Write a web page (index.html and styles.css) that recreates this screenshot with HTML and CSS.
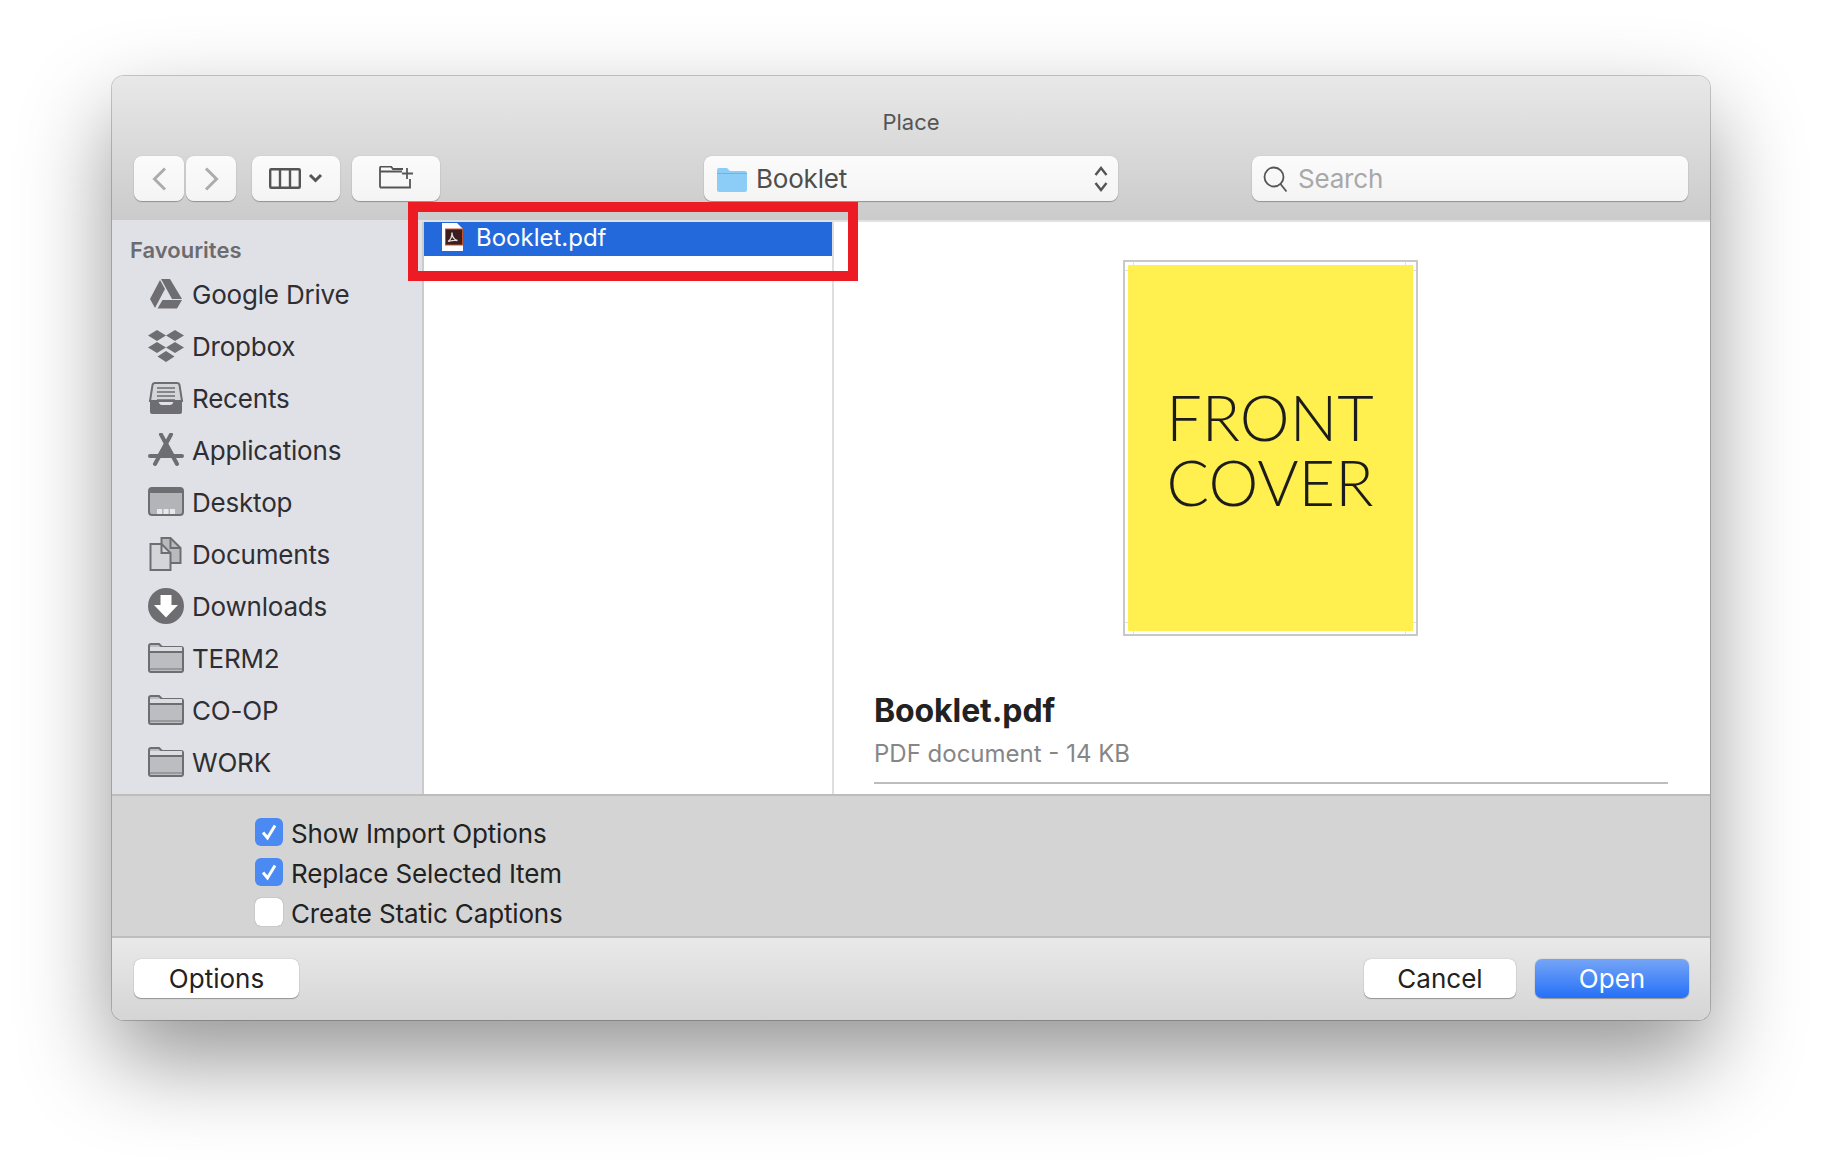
FILE: index.html
```html
<!DOCTYPE html>
<html lang="en">
<head>
    <meta charset="UTF-8">
    <title>Place</title>
    <link rel="stylesheet" href="styles.css">
</head>
<body>
    <div class="window">
        <div class="toolbar">
            <div class="title">Place</div>
            <div class="controls">
                <div class="nav-group">
                    <button class="tool nav-btn"><svg width="15" height="24" viewBox="0 0 15 24"><path d="M13 1.500 2.500 12 13 22.500" class="chev"/></svg></button>
                    <button class="tool nav-btn"><svg width="15" height="24" viewBox="0 0 15 24"><path d="M2 1.500 12.500 12 2 22.500" class="chev"/></svg></button>
                </div>
                <button class="tool view-btn">
                    <svg width="54" height="22" viewBox="0 0 54 22"><rect x="1.200" y="1.200" width="29.600" height="18.600" rx="1" class="line"/><path d="M11 1v19M21 1v19" class="line"/><path d="M41 7l5.500 5.500L52 7" class="line thick"/></svg>
                </button>
                <button class="tool folder-btn">
                    <svg width="36" height="26" viewBox="0 0 36 26"><path d="M2 21.500V2Q2 .500 3.500 .500H13l2 2.500h10M2 5.500h22M32 13v8.500H2" class="line thin"/><path d="M29 2v11M24 7.500h11" class="line thin"/></svg>
                </button>
                <div class="popup">
                    <svg width="32" height="26" viewBox="0 0 32 26"><path d="M1 4q0-2 2-2h8l3 3h15q2 0 2 2v17q0 2-2 2H3q-2 0-2-2z" fill="#8ccdf8"/><path d="M1 7h30v1H1z" fill="#6db5e8"/></svg>
                    <span class="popup-label">Booklet</span>
                    <svg class="updown" width="16" height="28" viewBox="0 0 16 28"><path d="M2.500 10 8 3l5.500 7M2.500 18 8 25l5.500-7" class="line"/></svg>
                </div>
                <div class="search">
                    <svg width="28" height="28" viewBox="0 0 28 28"><circle cx="12" cy="12" r="9.500" class="line thin"/><path d="M18.500 19l6 7.500" class="line thin"/></svg>
                    <span class="search-text">Search</span>
                </div>
            </div>
        </div>

        <div class="main">
            <div class="sidebar">
                <div class="side-head">Favourites</div>
                <div class="side-item">
                    <svg width="36" height="32" viewBox="0 0 36 32"><path d="M13 1h9l12 20H24zM12 2l5 9L7 30 2 21zM14.500 22H34l-5 8.500H9.500z" class="ico"/></svg>
                    <span>Google Drive</span>
                </div>
                <div class="side-item">
                    <svg width="36" height="34" viewBox="0 0 36 34"><path d="M9 1l9 5.500L9 12 0 6.500zM27 1l9 5.500-9 5.500-9-5.500zM9 13l9 5.500L9 24l-9-5.500zM27 13l9 5.500-9 5.500-9-5.500zM18 22l8.500 5.500L18 33l-8.500-5.500z" class="ico"/></svg>
                    <span>Dropbox</span>
                </div>
                <div class="side-item">
                    <svg width="36" height="34" viewBox="0 0 36 34"><path d="M7 2h22q2 0 2.500 2L34 20H2L4.500 4Q5 2 7 2z" fill="#d4d5d9" stroke="#6e6e72" stroke-width="2"/><path d="M9 7h18M9 11h18M9 15h18M9 19h18" stroke="#6e6e72" stroke-width="1.600"/><path d="M2 19h8q1 5 4 5h8q3 0 4-5h8v12q0 2-2 2H4q-2 0-2-2z" class="ico"/></svg>
                    <span>Recents</span>
                </div>
                <div class="side-item">
                    <svg width="36" height="34" viewBox="0 0 36 34"><path d="M13 1.500 29 31M23 1.500 7 31" stroke="#6e6e72" stroke-width="4" stroke-linecap="round" fill="none"/><path d="M2 23h32" stroke="#6e6e72" stroke-width="4" stroke-linecap="round"/><path d="M18 7l-9 16h18z" class="ico"/></svg>
                    <span>Applications</span>
                </div>
                <div class="side-item">
                    <svg width="36" height="30" viewBox="0 0 36 30"><rect x="1" y="1" width="34" height="27" rx="3" fill="#b3b4b7" stroke="#6e6e72" stroke-width="2"/><path d="M1 4q0-3 3-3h28q3 0 3 3v2H1z" class="ico"/><path d="M9 22h5v5H9zM15.500 22h5v5h-5zM22 22h5v5h-5z" fill="#e8e8ea"/></svg>
                    <span>Desktop</span>
                </div>
                <div class="side-item">
                    <svg class="doc-ico" width="33" height="34" viewBox="0 0 33 34"><path d="M12 1h9l10 10v15H12z" fill="#b9babd" stroke="#6e6e72" stroke-width="2"/><path d="M21 1v10h10" fill="none" stroke="#6e6e72" stroke-width="2"/><path d="M1 7h11l9 9v17H1z" fill="#d4d5d9" stroke="#6e6e72" stroke-width="2"/><path d="M12 7v9h9" fill="none" stroke="#6e6e72" stroke-width="2"/></svg>
                    <span>Documents</span>
                </div>
                <div class="side-item">
                    <svg width="36" height="36" viewBox="0 0 36 36"><circle cx="18" cy="18" r="18" class="ico"/><path d="M12.500 7h11v10H30L18 29.500 6 17h6.500z" fill="#fff"/></svg>
                    <span>Downloads</span>
                </div>
                <div class="side-item">
                    <svg width="36" height="30" viewBox="0 0 36 30"><use href="#folder"/></svg>
                    <span>TERM2</span>
                </div>
                <div class="side-item">
                    <svg width="36" height="30" viewBox="0 0 36 30"><use href="#folder"/></svg>
                    <span>CO-OP</span>
                </div>
                <div class="side-item">
                    <svg width="36" height="30" viewBox="0 0 36 30"><use href="#folder"/></svg>
                    <span>WORK</span>
                </div>
            </div>

            <div class="column">
                <div class="file-row">
                    <svg width="23" height="30" viewBox="0 0 23 30"><path d="M1 1h15l6 6v22H1z" fill="#fff"/><rect x="4.500" y="7" width="17" height="16" fill="#3a1f1c" stroke="#c9502e" stroke-width="1"/><path d="M7 19.500c2.500-1.500 4-5 4-9 0 4 2 7 5.500 8-3-.5-6 0-9.500 1z" fill="none" stroke="#e6dedc" stroke-width="1.300"/></svg>
                    <span>Booklet.pdf</span>
                </div>
            </div>

            <div class="preview">
                <div class="thumb">
                    <div class="cover">FRONT<br>COVER</div>
                </div>
                <div class="info">
                    <div class="info-name">Booklet.pdf</div>
                    <div class="info-kind">PDF document - 14 KB</div>
                </div>
            </div>
        </div>

        <div class="options">
            <div class="check-row">
                <span class="check on"><svg width="18" height="18" viewBox="0 0 18 18"><path d="M3 9.500 7.500 15 15 2.500" class="tick"/></svg></span>
                <span class="check-label">Show Import Options</span>
            </div>
            <div class="check-row">
                <span class="check on"><svg width="18" height="18" viewBox="0 0 18 18"><path d="M3 9.500 7.500 15 15 2.500" class="tick"/></svg></span>
                <span class="check-label">Replace Selected Item</span>
            </div>
            <div class="check-row">
                <span class="check"></span>
                <span class="check-label">Create Static Captions</span>
            </div>
        </div>

        <div class="footer">
            <button class="btn btn-options">Options</button>
            <div class="footer-right">
                <button class="btn btn-cancel">Cancel</button>
                <button class="btn btn-open">Open</button>
            </div>
        </div>

        <!-- annotation drawn over the screenshot -->
        <div class="highlight"></div>
    </div>

    <svg class="defs" width="0" height="0">
        <symbol id="folder" viewBox="0 0 36 30">
            <path d="M1 27V3q0-2 2-2h8l3 3h19q2 0 2 2v21q0 2-2 2H3q-2 0-2-2z" fill="#bcbdc0" stroke="#6e6e72" stroke-width="2"/>
            <path d="M2 4h32v4H2z" fill="#dcdde1"/>
            <path d="M1 9h34" stroke="#6e6e72" stroke-width="2"/>
            <path d="M2 25h32v2H2z" fill="#98999c"/>
        </symbol>
    </svg>
</body>
</html>
```

FILE: styles.css
```css
* {
    box-sizing: border-box;
}
body {
    margin: 0;
    padding: 76px 0 0 112px;
    height: 1168px;
    overflow: hidden;
    background-color: #fff;
    font-family: Inter, "Liberation Sans", sans-serif;
    color: #2a2a2c;
}
button {
    font-family: inherit;
    border: none;
    padding: 0;
}
.defs {
    position: absolute;
}
.window {
    position: relative;
    width: 1598px;
    height: 944px;
    border-radius: 12px;
    display: flex;
    flex-direction: column;
    box-shadow: 0 0 0 1px rgba(0, 0, 0, 0.2), 0 40px 90px rgba(0, 0, 0, 0.42);
}
.toolbar {
    height: 146px;
    padding: 0 22px;
    border-radius: 12px 12px 0 0;
    background: linear-gradient(#e8e8e8, #cbcbcb);
    border-bottom: 2px solid #e2e2e2;
}
.title {
    height: 80px;
    padding-top: 32px;
    text-align: center;
    font-size: 22px;
    line-height: 28px;
    color: #555;
}
.controls {
    display: flex;
    align-items: flex-start;
}
.tool {
    height: 45px;
    border-radius: 8px;
    background: linear-gradient(#fbfbfb, #f4f4f4);
    box-shadow: 0 1px 1px rgba(0, 0, 0, 0.28), 0 0 1px rgba(0, 0, 0, 0.25);
    display: flex;
    align-items: center;
    justify-content: center;
}
.nav-group {
    display: flex;
    gap: 2px;
}
.nav-btn {
    width: 50px;
}
.view-btn {
    width: 88px;
    margin-left: 16px;
}
.folder-btn {
    width: 88px;
    margin-left: 12px;
}
.chev {
    fill: none;
    stroke: #acacac;
    stroke-width: 3;
}
.line {
    fill: none;
    stroke: #555;
    stroke-width: 2.400;
}
.line.thick {
    stroke-width: 3;
}
.line.thin {
    stroke-width: 1.800;
}
.popup {
    width: 414px;
    height: 45px;
    margin-left: 264px;
    padding: 0 9px 0 12px;
    border-radius: 8px;
    background: linear-gradient(#fbfbfb, #f4f4f4);
    box-shadow: 0 1px 1px rgba(0, 0, 0, 0.28), 0 0 1px rgba(0, 0, 0, 0.25);
    display: flex;
    align-items: center;
}
.popup-label {
    margin-left: 8px;
    flex: 1;
    font-size: 26px;
    letter-spacing: -0.2px;
    color: #4e4e4e;
}
.search {
    width: 436px;
    height: 45px;
    margin-left: 134px;
    padding-left: 10px;
    border-radius: 8px;
    background: linear-gradient(#fbfbfb, #f4f4f4);
    box-shadow: 0 1px 1px rgba(0, 0, 0, 0.28), 0 0 1px rgba(0, 0, 0, 0.25);
    display: flex;
    align-items: center;
}
.search-text {
    margin-left: 8px;
    font-size: 26px;
    letter-spacing: -0.2px;
    color: #a8a8a8;
}
.main {
    height: 572px;
    display: flex;
    background-color: #fff;
}
.sidebar {
    width: 312px;
    background-color: #e0e1e6;
    border-right: 2px solid #cbcbcb;
}
.side-head {
    height: 28px;
    margin: 14px 0 4px 18px;
    font-size: 22px;
    line-height: 28px;
    font-weight: 600;
    color: #6c6c70;
}
.side-item {
    height: 52px;
    padding-left: 36px;
    display: flex;
    align-items: center;
    font-size: 26px;
    letter-spacing: -0.2px;
    color: #2f2f33;
}
.side-item svg {
    width: 36px;
    margin-right: 8px;
    flex-shrink: 0;
}
.ico {
    fill: #6e6e72;
}
.column {
    width: 410px;
    border-right: 2px solid #dedede;
}
.file-row {
    height: 34px;
    padding: 0 0 4px 17px;
    display: flex;
    align-items: center;
    gap: 12px;
    background-color: #2469db;
    color: #fff;
    font-size: 24px;
}
.preview {
    flex: 1;
    padding: 38px 42px 0 40px;
    display: flex;
    flex-direction: column;
    align-items: center;
}
.thumb {
    width: 295px;
    height: 376px;
    margin-right: 2px;
    padding: 3px;
    border: 2px solid #c8c8c8;
    background-image: linear-gradient(#dedede, #dedede), linear-gradient(#dedede, #dedede), linear-gradient(#dedede, #dedede), linear-gradient(#dedede, #dedede);
    background-size: 1px 100%, 1px 100%, 100% 1px, 100% 1px;
    background-position: 8px 0, 280px 0, 0 8px, 0 360px;
    background-repeat: no-repeat;
}
.cover {
    height: 100%;
    padding-top: 119px;
    background-color: #fff04f;
    text-align: center;
    font-family: Lato, "Open Sans", sans-serif;
    font-weight: 300;
    font-size: 63px;
    line-height: 65px;
    color: #1c1c1c;
}
.info {
    align-self: stretch;
    height: 92px;
    margin-top: 56px;
    border-bottom: 2px solid #bdbdbd;
}
.info-name {
    font-size: 32px;
    line-height: 38px;
    font-weight: 700;
    letter-spacing: -0.1px;
    color: #222;
}
.info-kind {
    margin-top: 9px;
    font-size: 24px;
    line-height: 30px;
    color: #868686;
}
.options {
    height: 144px;
    padding: 22px 0 0 143px;
    background-color: #d4d4d4;
    border-top: 2px solid #bdbdbd;
    border-bottom: 2px solid #bebebe;
}
.check-row {
    height: 28px;
    margin-bottom: 12px;
    display: flex;
    align-items: center;
    gap: 8px;
    font-size: 26px;
    letter-spacing: -0.15px;
    color: #222;
}
.check-label {
    padding-top: 2px;
}
.check {
    width: 28px;
    height: 28px;
    border-radius: 6px;
    background-color: #fff;
    box-shadow: 0 0 1px rgba(0, 0, 0, 0.5);
    display: flex;
    align-items: center;
    justify-content: center;
}
.check.on {
    background-color: #4b89f3;
    box-shadow: none;
}
.tick {
    fill: none;
    stroke: #fff;
    stroke-width: 3;
}
.footer {
    height: 82px;
    padding: 21px 21px 0 22px;
    border-radius: 0 0 12px 12px;
    background: linear-gradient(#e9e9e9, #d5d5d5);
    display: flex;
    justify-content: space-between;
}
.footer-right {
    display: flex;
    gap: 19px;
}
.btn {
    height: 39px;
    border-radius: 7px;
    font-size: 26px;
    color: #222;
    background-color: #fff;
    box-shadow: 0 1px 1px rgba(0, 0, 0, 0.3), 0 0 1px rgba(0, 0, 0, 0.35);
}
.btn-options {
    width: 165px;
}
.btn-cancel {
    width: 152px;
}
.btn-open {
    width: 154px;
    color: #fff;
    background: linear-gradient(#76a5f6, #2570f8);
}
.highlight {
    position: absolute;
    left: 296px;
    top: 126px;
    width: 450px;
    height: 79px;
    border: 10px solid #ed1c24;
}
```
